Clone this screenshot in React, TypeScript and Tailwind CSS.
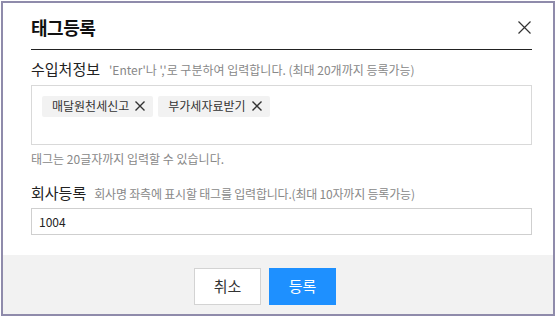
const tags = ["매달원천세신고", "부가세자료받기"];

function Cross({ size, stroke }: { size: number; stroke: number }) {
  return (
    <svg width={size} height={size} viewBox={`0 0 ${size} ${size}`} fill="none" stroke="currentColor" strokeWidth={stroke}>
      <path d={`M0.5 0.5L${size - 0.5} ${size - 0.5}M${size - 0.5} 0.5L0.5 ${size - 0.5}`} />
    </svg>
  );
}

export default function App() {
  return (
    <div className="w-[555px] h-[316px] bg-white pl-px pt-px" style={{ fontFamily: '"Noto Sans CJK KR", "Noto Sans", sans-serif' }}>
      <div className="w-[554px] h-[315px] border-2 border-[#8f8bab] flex flex-col">
        <div className="flex-1 pl-[28px] pr-[21px] bg-white">
          {/* Header */}
          <div className="flex items-center justify-between h-[47px] pt-[2px] border-b border-[#222]">
            <h1 className="text-[18px] font-bold text-[#111] tracking-tight">태그등록</h1>
            <span className="text-[#333] mr-px">
              <Cross size={13} stroke={1.2} />
            </span>
          </div>

          {/* 수입처정보 */}
          <div className="flex items-baseline gap-[9px] mt-[8px]">
            <span className="text-[15px] text-[#222]">수입처정보</span>
            <span className="text-[12px] text-[#888]">'Enter'나 ','로 구분하여 입력합니다. (최대 20개까지 등록가능)</span>
          </div>
          <div className="mt-[4px] h-[60px] border border-[#d9d9d9] px-[10px] pt-[10px] flex gap-[5px] items-start">
            {tags.map((t) => (
              <span key={t} className="flex items-center gap-[6px] bg-[#f2f2f2] h-[21px] pl-[10px] pr-[8px] text-[12px] text-[#333] rounded-[2px]">
                {t}
                <Cross size={10} stroke={1.4} />
              </span>
            ))}
          </div>
          <p className="mt-[5px] text-[12px] text-[#888]">태그는 20글자까지 입력할 수 있습니다.</p>

          {/* 회사등록 */}
          <div className="flex items-baseline gap-[8px] mt-[14px]">
            <span className="text-[15px] text-[#222]">회사등록</span>
            <span className="text-[12px] text-[#888] tracking-[-0.2px]">회사명 좌측에 표시할 태그를 입력합니다.(최대 10자까지 등록가능)</span>
          </div>
          <div className="mt-[4px] h-[27px] border border-[#cfcfcf] px-[7px] flex items-center text-[12px] text-[#222]">
            1004
          </div>
        </div>

        {/* Footer */}
        <div className="h-[59px] bg-[#f2f2f2] flex items-start gap-[8px] pt-[13px] pl-[191px]">
          <button className="w-[67px] h-[37px] bg-white border border-[#d3d3d3] text-[15px] text-[#333]">취소</button>
          <button className="w-[67px] h-[37px] bg-[#1e90ff] text-[15px] text-white">등록</button>
        </div>
      </div>
    </div>
  );
}
